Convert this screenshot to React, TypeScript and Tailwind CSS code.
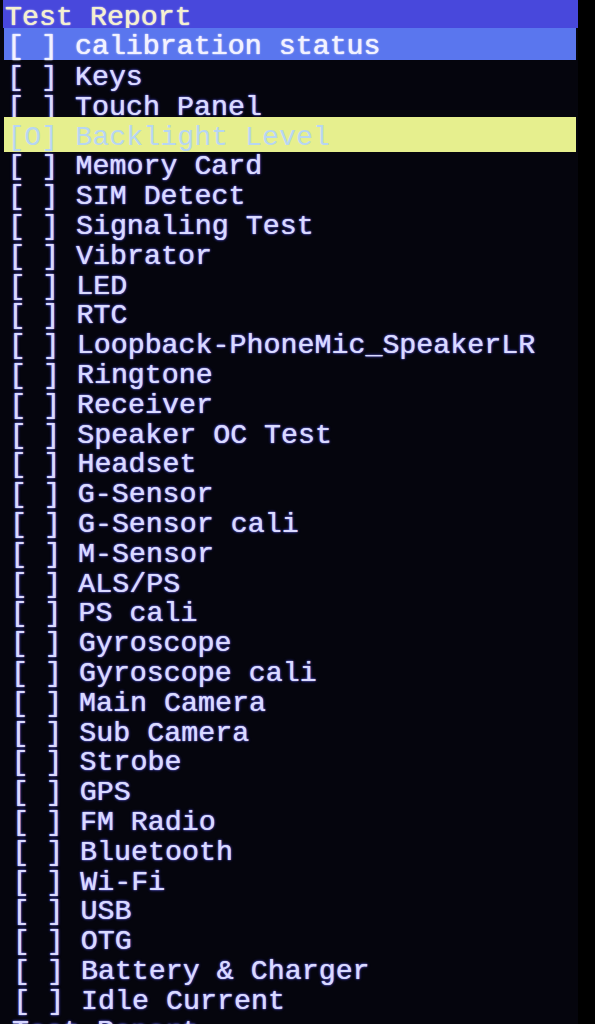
import React from 'react';

const items: string[] = [
  'Keys',
  'Touch Panel',
  'Backlight Level',
  'Memory Card',
  'SIM Detect',
  'Signaling Test',
  'Vibrator',
  'LED',
  'RTC',
  'Loopback-PhoneMic_SpeakerLR',
  'Ringtone',
  'Receiver',
  'Speaker OC Test',
  'Headset',
  'G-Sensor',
  'G-Sensor cali',
  'M-Sensor',
  'ALS/PS',
  'PS cali',
  'Gyroscope',
  'Gyroscope cali',
  'Main Camera',
  'Sub Camera',
  'Strobe',
  'GPS',
  'FM Radio',
  'Bluetooth',
  'Wi-Fi',
  'USB',
  'OTG',
  'Battery & Charger',
  'Idle Current',
];

const mono = "font-['Liberation_Mono',_'DejaVu_Sans_Mono',_monospace] text-[28.3px] whitespace-pre";
const glow = '[text-shadow:0_0_1px_#d0d0ff,0_0_3px_#4f4fff]';

const App: React.FC = () => {
  return (
    <div className="w-[595px] h-[1024px] overflow-hidden bg-black flex">
      <div className={`w-[578px] h-full bg-[#05050d] flex flex-col ${mono}`}>
        {/* header */}
        <div className="h-[28px] shrink-0 bg-[#4848dc] ml-[3px]">
          <div className="mt-[2px] pl-[2px] leading-[30px] text-[#f4f0cf] [text-shadow:0_0_1px_#fff8d8,0_0_2px_#b0b0ff]">
            Test Report
          </div>
        </div>
        {/* selected row */}
        <div className="h-[32px] shrink-0 bg-[#5a76ee] ml-[4px] mr-[2px]">
          <div className="mt-[3px] pl-[3px] leading-[30px] text-[#f2f2ff] [text-shadow:0_0_1px_#ffffff,0_0_2px_#c0c8ff]">
            {'[ ] calibration status'}
          </div>
        </div>
        <div className="pt-[3px] flex flex-col">
          {items.map((name, i) => {
            const active = name === 'Backlight Level';
            return (
              <div
                key={name}
                className={`shrink-0 leading-[29.8px] ${
                  active
                    ? 'h-[35.8px] -mt-[6px] pt-[6px] bg-[#e6ef8e] text-[#b7d6f2] ml-[4px] mr-[2px]'
                    : `h-[29.8px] text-[#dadaff] ${glow}`
                }`}
                style={{ paddingLeft: (active ? 3 : 7) + i * 0.2 }}
              >
                {active ? `[O] ${name}` : `[ ] ${name}`}
              </div>
            );
          })}
          <div className={`h-[29.8px] shrink-0 leading-[29.8px] pl-[12px] text-[#d6d6ff] ${glow}`}>
            Test Report
          </div>
        </div>
      </div>
    </div>
  );
};

export default App;
